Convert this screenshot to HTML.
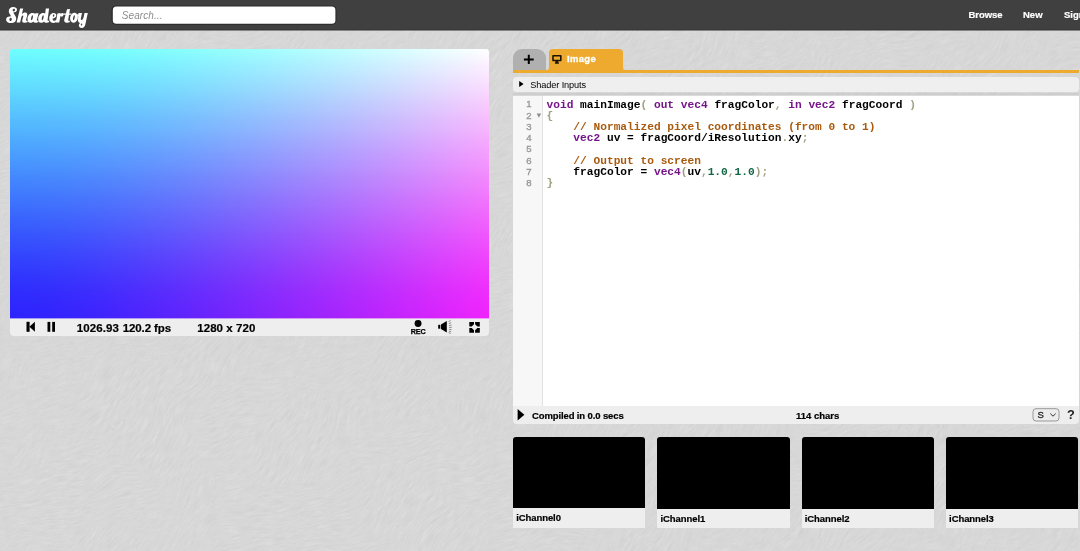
<!DOCTYPE html>
<html>
<head>
<meta charset="utf-8">
<title>Shadertoy</title>
<style>
html,body{margin:0;padding:0;}
html{background:#d7d7d7;}
body{width:1080px;height:551px;overflow:hidden;position:relative;will-change:transform;background:#d7d7d7;font-family:"Liberation Sans",sans-serif;color:#000;}
.abs{position:absolute;}
#bgtex{position:absolute;left:0;top:0;width:1080px;height:551px;}
#header{position:absolute;left:0;top:0;width:1080px;height:31px;background:linear-gradient(#404040 0,#404040 29px,#393939 29px,#393939 30px,rgba(52,52,52,0.5) 30px,rgba(52,52,52,0.5) 31px);}
.nav{-webkit-text-stroke:0.2px #fff;position:absolute;top:9px;font-size:9.5px;font-weight:bold;color:#fff;line-height:12px;white-space:nowrap;}
#canvas{position:absolute;left:10px;top:49px;width:479px;height:269.4px;border-radius:3px 3px 0 0;overflow:hidden;}
#canvas div{position:absolute;left:0;top:0;width:100%;height:100%;}
#grad{filter:url(#cm);}
#toolbar{position:absolute;left:10px;top:318.3px;width:479px;height:17.6px;background:#eeeeee;border-radius:0 0 4px 4px;}
.tb{-webkit-text-stroke:0.2px #000;position:absolute;top:321.6px;font-size:11.5px;font-weight:bold;line-height:12px;white-space:nowrap;color:#000;}
#tabplus{position:absolute;left:513px;top:49px;width:32.5px;height:21px;background:#b0b0b0;border-radius:9px 9px 0 0;}
#tabimg{position:absolute;left:549px;top:49px;width:74.3px;height:21px;background:#eeaa2e;border-radius:4px 4px 0 0;}
#tabline{position:absolute;left:513px;top:70px;width:566px;height:3px;background:#eeaa2e;}
#inputs{position:absolute;left:513px;top:77.4px;width:566px;height:15.1px;background:#efefef;border-radius:3.5px;}
#strip{position:absolute;left:513px;top:92.5px;width:566px;height:3px;background:rgba(0,0,0,0.045);}
#editor{position:absolute;left:513px;top:95px;width:566px;height:310.6px;background:#fff;}
#gutter{position:absolute;left:0;top:0;width:29px;height:100%;background:#f7f7f7;border-right:1px solid #e2e2e2;}
.ln{position:absolute;left:0;width:18.6px;text-align:right;font-size:9.6px;line-height:11.25px;color:#999;-webkit-text-stroke:0.35px #999;}
.cl{position:absolute;left:33.5px;font-family:"Liberation Mono",monospace;font-weight:bold;font-size:11.2px;line-height:11.25px;white-space:pre;color:#000;}
.k{color:#761489;}.c{color:#a95a0e;}.p{color:#a0a082;}.n{color:#116644;}
#status{position:absolute;left:513px;top:405.6px;width:566px;height:18.1px;background:#eeeeee;border-radius:0 0 4px 4px;}
.st{-webkit-text-stroke:0.2px #000;position:absolute;top:410px;font-size:9.5px;font-weight:bold;line-height:12px;white-space:nowrap;}
.ch{position:absolute;top:437px;width:132.3px;height:91px;}
.ch i{position:absolute;left:0;top:0;width:100%;height:71.4px;background:#000;display:block;border-radius:3px 3px 0 0;}
.ch u{position:absolute;left:0;top:71px;width:100%;height:20.1px;background:#eeeeee;display:block;}
.ch b{-webkit-text-stroke:0.2px #000;position:absolute;left:3.2px;top:75px;font-size:9.5px;line-height:12px;font-style:normal;letter-spacing:-0.08px;}
</style>
</head>
<body>
<svg id="bgtex" width="1080" height="551" viewBox="0 0 1080 551">
<filter id="fur" x="0" y="0" width="100%" height="100%" color-interpolation-filters="sRGB">
<feTurbulence type="fractalNoise" baseFrequency="0.07 0.75" numOctaves="2" seed="3" result="strands"/>
<feTurbulence type="fractalNoise" baseFrequency="0.02 0.02" numOctaves="1" seed="11" result="warp"/>
<feDisplacementMap in="strands" in2="warp" scale="30" xChannelSelector="R" yChannelSelector="G" result="d"/>
<feColorMatrix in="d" type="matrix" values="0.08 0 0 0 0.803  0.08 0 0 0 0.803  0.08 0 0 0 0.803  0 0 0 0 1"/>
</filter>
<filter id="fur2" x="0" y="0" width="100%" height="100%" color-interpolation-filters="sRGB">
<feTurbulence type="fractalNoise" baseFrequency="0.07 0.75" numOctaves="2" seed="29" result="strands"/>
<feTurbulence type="fractalNoise" baseFrequency="0.02 0.02" numOctaves="1" seed="5" result="warp"/>
<feDisplacementMap in="strands" in2="warp" scale="30" xChannelSelector="R" yChannelSelector="G" result="d"/>
<feTurbulence type="fractalNoise" baseFrequency="0.012 0.012" numOctaves="1" seed="8" result="mask"/>
<feColorMatrix in="mask" type="matrix" values="0 0 0 0 0  0 0 0 0 0  0 0 0 0 0  6 0 0 0 -2.5" result="m"/>
<feColorMatrix in="d" type="matrix" values="0.08 0 0 0 0.803  0.08 0 0 0 0.803  0.08 0 0 0 0.803  0 0 0 0 1" result="c"/>
<feComposite in="c" in2="m" operator="in"/>
</filter>
<rect width="1080" height="551" fill="#d7d7d7"/>
<rect x="-200" y="-400" width="1500" height="1500" filter="url(#fur)" transform="rotate(-55 540 275)"/>
<rect x="-200" y="-400" width="1500" height="1500" filter="url(#fur2)" transform="rotate(-15 540 275)"/>
</svg>
<div id="header">
  <svg id="logo" class="abs" style="left:0;top:0" width="100" height="31" viewBox="0 0 100 31">
<g fill="#fff">
<path d="M17.0 9.6C17.0 8.0 15.4 7.1 13.2 7.1C10.6 7.1 8.8 8.9 8.8 11.3C8.8 13.0 9.8 14.4 10.8 15.4L10.4 16.6C8.4 16.2 6.1 17.4 6.1 19.7C6.1 21.8 8.4 23.1 11.4 23.1C14.2 23.1 16.2 21.4 16.2 18.8C16.2 16.6 14.8 15.2 13.8 13.6C13.3 12.8 13.6 12.2 14.4 12.2C16.0 12.2 17.0 11.2 17.0 9.6Z"/>
<path d="M20.1 8.4L23.2 8.4L21.9 14.0C22.8 12.8 24.2 12.3 25.4 12.4C27.0 12.6 27.6 13.8 27.2 15.4L26.0 20.0C25.9 20.8 26.4 21.0 27.2 20.6L27.8 22.0C26.6 22.8 24.6 23.0 23.2 22.6C22.2 22.2 22.0 21.2 22.3 20.0L23.3 16.4C23.5 15.6 23.0 15.2 22.4 15.6C21.8 16.0 21.4 17.0 21.2 17.8L20.1 22.6L16.6 22.6Z"/>
<path d="M38.6 13.2L36.9 19.8C36.7 20.8 37.2 21.0 38.0 20.6L38.6 22.0C37.4 22.8 35.4 23.0 34.2 22.4C33.8 22.2 33.4 21.8 33.3 21.4C32.4 22.6 31.2 22.9 30.2 22.8C28.2 22.6 27.3 20.6 27.5 18.4C27.8 15.2 29.8 12.8 32.6 12.9C33.8 12.9 34.6 13.2 35.2 13.8L35.4 13.2Z"/>
<path d="M45.8 8.4L49.1 8.4L47.6 19.8C47.4 20.8 47.9 21.0 48.7 20.6L49.3 22.0C48.1 22.8 46.1 23.0 44.9 22.4C44.5 22.2 44.1 21.8 44.0 21.4C43.1 22.6 41.9 22.9 40.9 22.8C38.9 22.6 38.0 20.6 38.2 18.4C38.5 15.2 40.5 12.8 43.3 12.9C44.2 12.9 44.8 13.1 45.2 13.4Z"/>
<path d="M53.6 13.0C55.4 13.0 56.5 14.0 56.3 15.4C56.1 17.2 54.4 18.2 52.6 18.5C52.6 20.0 53.2 20.8 54.4 20.8C55.4 20.8 56.2 20.2 56.9 19.6L57.7 20.8C56.6 22.2 55.0 22.9 53.2 22.9C50.6 22.9 49.1 21.0 49.2 18.6C49.3 15.4 51.2 13.0 53.6 13.0Z"/>
<path d="M57.4 13.4L60.6 13.0L60.4 14.2C61.0 13.4 61.8 13.0 62.4 13.0C63.4 13.0 63.6 14.0 63.4 15.0C63.2 16.2 62.4 16.8 61.4 16.6C60.8 16.4 60.6 15.8 60.6 15.4L59.2 22.6L55.8 22.6Z"/>
<path d="M67.0 9.2L70.0 9.0L68.2 19.8C68.0 20.8 68.6 21.0 69.4 20.6L70.0 22.0C68.8 22.8 66.8 23.0 65.6 22.6C64.4 22.2 64.0 21.0 64.3 19.6Z"/>
<path d="M63.2 13.4L71.4 13.4L71.2 14.8L63.0 14.8Z"/>
<ellipse cx="74" cy="17.75" rx="3.9" ry="5.0" transform="rotate(12 74 17.75)"/>
<path d="M77 14.2L79 14.6L78.8 16.4L77.4 16Z"/>
<path d="M78.5 13.0L82.0 13.0L80.9 18.6C80.7 19.8 81.2 20.4 81.9 20.0C82.8 19.4 83.4 18.2 83.6 17.2L84.5 13.0L87.8 13.0L85.4 24.2C84.9 26.6 83.6 27.9 81.8 27.9C79.8 27.9 78.6 26.6 78.9 25.0C79.0 24.2 79.4 23.6 80.0 23.0C78.6 22.6 77.6 21.2 78.0 19.4Z"/>
</g>
<g fill="#404040">
<ellipse cx="13.8" cy="10.1" rx="1.15" ry="1.35" transform="rotate(20 13.8 10.1)"/>
<ellipse cx="10.6" cy="19.4" rx="1.2" ry="1.55" transform="rotate(15 10.6 19.4)"/>
<ellipse cx="32.0" cy="17.7" rx="0.8" ry="2.5" transform="rotate(14 32 17.7)"/>
<ellipse cx="42.7" cy="17.7" rx="0.8" ry="2.5" transform="rotate(14 42.7 17.7)"/>
<ellipse cx="53.6" cy="15.6" rx="0.7" ry="1.3" transform="rotate(20 53.6 15.6)"/>
<ellipse cx="73.9" cy="17.75" rx="0.75" ry="2.5" transform="rotate(14 73.9 17.75)"/>
<ellipse cx="81.5" cy="24.5" rx="0.7" ry="0.9"/>
</g>
</svg>
  <svg class="abs" style="left:108px;top:2px" width="232" height="26" viewBox="108 2 232 26"><rect x="111.5" y="5.4" width="225" height="19.4" rx="4.8" fill="#292929"/><rect x="112.8" y="6.5" width="222.6" height="17.3" rx="3.6" fill="#fff"/></svg>
  <div class="abs" style="left:121.8px;top:10px;font-size:10px;font-style:italic;color:#8c8c8c;line-height:12px;white-space:nowrap;letter-spacing:0.08px">Search...</div>
  <div class="nav" style="left:968.6px;letter-spacing:-0.1px">Browse</div>
  <div class="nav" style="left:1023px">New</div>
  <div class="nav" style="left:1064px">Sign In</div>
</div>

<svg width="0" height="0" style="position:absolute"><defs>
<filter id="cm" x="0" y="0" width="100%" height="100%" color-interpolation-filters="linearRGB">
<feColorMatrix type="matrix" values="0.844 0.130 0.026 0 0  0 0.983 0.017 0 0  0 0.018 0.982 0 0  0 0 0 1 0"/>
</filter></defs></svg>
<div id="canvas">
  <div id="grad"><div style="background:linear-gradient(to right,#00ffff,#ffffff);"></div>
  <div style="background:linear-gradient(to right,#0000ff,#ff00ff);-webkit-mask-image:linear-gradient(to bottom,transparent,#000);mask-image:linear-gradient(to bottom,transparent,#000);"></div></div>
</div>
<div id="toolbar"></div>
<div class="abs" style="left:10px;top:318px;width:479px;height:1px;opacity:0.4;background:linear-gradient(to right,#2d24fd,#ef24fd);"></div>
<div class="tb" style="left:76.8px;letter-spacing:0.1px">1026.93</div>
<div class="tb" style="left:122.8px;letter-spacing:-0.12px">120.2 fps</div>
<div class="tb" style="left:197.2px;letter-spacing:0.08px">1280 x 720</div>

<svg class="abs" style="left:0;top:316px" width="500" height="22" viewBox="0 316 500 22">
<g fill="#000">
<!-- rewind -->
<rect x="26.5" y="321.8" width="3.1" height="10"/>
<path d="M29.4 326.8L34.9 321.8L34.9 331.8Z"/>
<!-- pause -->
<rect x="47.5" y="321.9" width="2.8" height="9.9"/>
<rect x="52.2" y="321.9" width="2.8" height="9.9"/>
<!-- rec -->
<circle cx="418.05" cy="323.5" r="3.45"/>
<!-- speaker -->
<rect x="438.2" y="324.8" width="2.1" height="3.9"/>
<path d="M441 324.6L446.8 321.1L446.8 332.6L441 329Z"/>
<!-- fullscreen -->
<path d="M469.3 321.9H474V324.3L471.7 326.6H469.3Z"/>
<path d="M479.8 321.9H475.1V324.3L477.4 326.6H479.8Z"/>
<path d="M469.3 332.7H474V330.3L471.7 328H469.3Z"/>
<path d="M479.8 332.7H475.1V330.3L477.4 328H479.8Z"/>
</g>
<g stroke="#555" stroke-width="0.65" fill="none">
<path d="M448.6 321.6L450.6 320.4M448.9 323.6L451.2 322.6M449.1 325.6L451.6 325.0M449.1 327.4L451.7 327.4M449.1 329.2L451.6 329.8M448.9 331.0L451.2 332.0M448.6 332.6L450.6 333.6"/>
</g>
</svg>
<div class="abs" style="left:410.8px;top:327.9px;font-size:7.2px;font-weight:bold;line-height:8px;letter-spacing:-0.15px;-webkit-text-stroke:0.25px #000;">REC</div>
<div id="tabplus"></div>
<div id="tabimg"></div>
<div id="tabline"></div>
<div id="inputs"></div><div id="strip"></div>
<svg class="abs" style="left:510px;top:46px" width="130" height="50" viewBox="510 46 130 50">
<!-- flares of image tab -->
<path d="M547.4 70L549 70L549 66.5C549 68.8 548.4 70 547.4 70Z" fill="#eeaa2e"/>
<path d="M624.9 70L623.3 70L623.3 66.5C623.3 68.8 623.9 70 624.9 70Z" fill="#eeaa2e"/>
<!-- plus -->
<path d="M527.8 54.8H529.8V58.4H533.7V60.4H529.8V64.1H527.8V60.4H523.9V58.4H527.8Z" fill="#000"/>
<!-- monitor -->
<path d="M553.2 54.9H560.6C561.2 54.9 561.6 55.3 561.6 55.9V60.3C561.6 60.9 561.2 61.3 560.6 61.3H558.2L559 63.7H554.8L555.6 61.3H553.2C552.6 61.3 552.2 60.9 552.2 60.3V55.9C552.2 55.3 552.6 54.9 553.2 54.9ZM553.8 56.4V59.8H560V56.4Z" fill="#1c1400" fill-rule="evenodd"/>
<!-- shader inputs triangle -->
<path d="M519.2 80.9L523.6 84L519.2 87.1Z" fill="#000"/>
</svg>
<div class="abs" style="left:566.9px;top:52.8px;font-size:9.5px;font-weight:bold;line-height:12px;color:#fff;letter-spacing:0.35px;-webkit-text-stroke:0.3px #fff;">Image</div>

<div class="abs" style="left:530.3px;top:79.2px;font-size:9.2px;line-height:12px;white-space:nowrap;letter-spacing:-0.12px;">Shader Inputs</div>

<div id="editor">
  <div class="abs" style="left:0;top:0;width:566px;height:1px;background:rgba(190,190,190,0.55);z-index:3"></div>
  <div id="gutter"></div>
  <div id="lns" style="position:absolute;left:0;top:0;width:30px;height:100px;transform:translateY(0px);">
  <div class="ln" style="top:3.4px">1</div>
  <div class="ln" style="top:14.62px">2</div>
  <div class="ln" style="top:25.84px">3</div>
  <div class="ln" style="top:37.06px">4</div>
  <div class="ln" style="top:48.28px">5</div>
  <div class="ln" style="top:59.5px">6</div>
  <div class="ln" style="top:70.72px">7</div>
  <div class="ln" style="top:81.94px">8</div>
  </div>
  <svg class="abs" style="left:22.5px;top:18px" width="6" height="6" viewBox="0 0 6 6"><path d="M0.6 0.6H5.2L2.9 4.7Z" fill="#8f8f8f"/></svg>
  <div class="cl" style="top:4.7px"><span class="k">void</span> mainImage<span class="p">(</span> <span class="k">out</span> <span class="k">vec4</span> fragColor<span class="p">,</span> <span class="k">in</span> <span class="k">vec2</span> fragCoord <span class="p">)</span></div>
  <div class="cl" style="top:15.95px"><span class="p">{</span></div>
  <div class="cl" style="top:27.2px">    <span class="c">// Normalized pixel coordinates (from 0 to 1)</span></div>
  <div class="cl" style="top:38.45px">    <span class="k">vec2</span> uv = fragCoord/iResolution<span class="p">.</span>xy<span class="p">;</span></div>
  <div class="cl" style="top:60.95px">    <span class="c">// Output to screen</span></div>
  <div class="cl" style="top:72.2px">    fragColor = <span class="k">vec4</span><span class="p">(</span>uv<span class="p">,</span><span class="n">1.0</span><span class="p">,</span><span class="n">1.0</span><span class="p">);</span></div>
  <div class="cl" style="top:83.45px"><span class="p">}</span></div>
</div>

<div id="status"></div>
<svg class="abs" style="left:513px;top:405px" width="567" height="20" viewBox="513 405 567 20">
<path d="M517.6 408.9L524.4 414.7L517.6 420.5Z" fill="#000"/>
<rect x="1033" y="408.7" width="26" height="12.3" rx="3" ry="3" fill="#ececec" stroke="#8e8e8e" stroke-width="0.9"/>
<path d="M1050.3 413.6L1053 416.2L1055.7 413.6" fill="none" stroke="#333" stroke-width="1"/>
</svg>
<div class="abs" style="left:1037.6px;top:408.5px;font-size:9.5px;line-height:12px;color:#222;-webkit-text-stroke:0.3px #222;">S</div>
<div class="abs" style="left:1066.9px;top:407.4px;font-size:13.6px;font-weight:bold;line-height:15px;color:#222;transform:scaleX(0.94);transform-origin:0 0;">?</div>
<div class="st" style="left:532px;letter-spacing:-0.12px">Compiled in 0.0 secs</div>
<div class="st" style="left:796px">114 chars</div>

<div class="ch" style="left:513px"><u></u><i></i><b>iChannel0</b></div>
<div class="ch" style="left:657.3px"><u></u><i style="height:72.1px"></i><b style="top:75.6px">iChannel1</b></div>
<div class="ch" style="left:801.6px"><u></u><i style="height:72.1px"></i><b style="top:75.6px">iChannel2</b></div>
<div class="ch" style="left:945.9px"><u></u><i style="height:72.1px"></i><b style="top:75.6px">iChannel3</b></div>
</body>
</html>
